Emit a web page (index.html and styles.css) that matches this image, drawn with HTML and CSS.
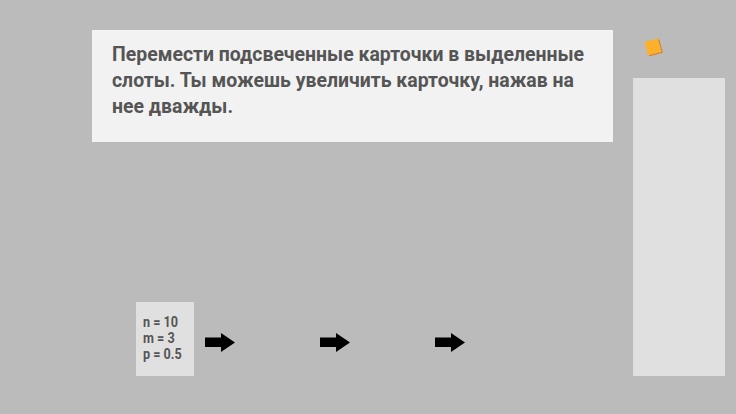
FILE: index.html
```html
<!DOCTYPE html>
<html>
<head>
<meta charset="utf-8">
<link rel="stylesheet" href="styles.css">
</head>
<body>
<div class="stage">
  <div class="main">
    <div class="prompt">
      <div class="prompt-text">Перемести подсвеченные карточки в выделенные слоты. Ты можешь увеличить карточку, нажав на нее дважды.</div>
    </div>
    <div class="row">
      <div class="card">
        <div class="card-text">
          <div>n = 10</div>
          <div>m = 3</div>
          <div>p = 0.5</div>
        </div>
      </div>
      <div class="slots">
        <svg class="arrow" width="30" height="20" viewBox="0 0 30 20"><path d="M0 4.5H16V0L30 9.5L16 19V14H0Z" fill="#000"/></svg>
        <svg class="arrow" width="30" height="20" viewBox="0 0 30 20"><path d="M0 4.5H16V0L30 9.5L16 19V14H0Z" fill="#000"/></svg>
        <svg class="arrow" width="30" height="20" viewBox="0 0 30 20"><path d="M0 4.5H16V0L30 9.5L16 19V14H0Z" fill="#000"/></svg>
      </div>
    </div>
  </div>
  <div class="side">
    <div class="gem"></div>
    <div class="panel"></div>
  </div>
</div>
</body>
</html>
```
FILE: styles.css
```css
html, body {
  margin: 0;
  padding: 0;
  background: #bbbbbb;
  width: 736px;
  height: 414px;
  overflow: hidden;
  font-family: "Roboto", "Liberation Sans", sans-serif;
}
.stage {
  display: flex;
  width: 736px;
  height: 414px;
}
.main {
  width: 521px;
  margin-left: 92px;
  padding-top: 30px;
  display: flex;
  flex-direction: column;
}
.prompt {
  background: #f2f2f2;
  height: 112px;
  box-sizing: border-box;
  padding: 11px 0 0 20px;
  color: #555555;
  font-weight: 700;
  font-size: 21px;
  line-height: 26px;
  overflow: hidden;
}
.prompt-text {
  width: 520px;
  transform: scaleX(0.925);
  transform-origin: left top;
}
.row {
  display: flex;
  align-items: flex-start;
  margin-top: 160px;
  margin-left: 44px;
}
.card {
  width: 58px;
  height: 74px;
  background: #e0e0e0;
  box-sizing: border-box;
  padding: 12px 0 0 7px;
  color: #555555;
  font-weight: 700;
  font-size: 14px;
  line-height: 16px;
}
.card-text {
  transform: scaleX(0.9);
  transform-origin: left top;
}
.slots {
  display: flex;
  gap: 85px;
  margin-left: 11px;
  margin-top: 31px;
}
.arrow {
  display: block;
}
.side {
  margin-left: 20px;
  width: 92px;
  display: flex;
  flex-direction: column;
}
.gem {
  width: 14px;
  height: 14px;
  background: #fdb12a;
  box-shadow: 1px 1px 0 #d07a3a;
  transform: rotate(-15deg);
  margin: 40px 0 0 13px;
}
.panel {
  margin-top: 24px;
  height: 298px;
  background: #e0e0e0;
}
```
